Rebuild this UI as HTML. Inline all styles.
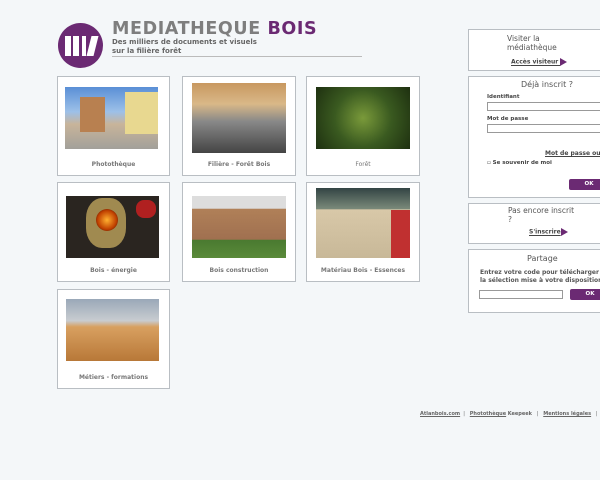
<!DOCTYPE html>
<html><head><meta charset="utf-8"><style>
body{margin:0;width:600px;height:480px;background:#f4f7f9;font-family:"DejaVu Sans","Liberation Sans",sans-serif;position:relative;overflow:hidden}
.a{position:absolute}
.t{position:absolute;background:#fff;border:1px solid #b9bec3;box-sizing:border-box}
.l{position:absolute;left:0;right:0;text-align:center;font-size:6px;font-weight:bold;color:#777}
.im{position:absolute}
.p{position:absolute;left:468px;width:140px;background:#fff;border:1px solid #b9bec3;box-sizing:border-box}
.btn{position:absolute;background:#6b2a73;color:#fff;font-size:5.5px;font-weight:bold;text-align:center;border-radius:2px}
.in{position:absolute;background:#fff;border:1px solid #999;box-sizing:border-box;height:9px}
.tri{display:inline-block;width:0;height:0;border-left:7px solid #6b2a73;border-top:4px solid transparent;border-bottom:4px solid transparent;vertical-align:middle}
</style></head><body>
<div class="a" style="left:58px;top:23px;width:45px;height:45px;border-radius:50%;background:#6b2a73"></div>
<div class="a" style="left:65px;top:36px;width:6px;height:20px;background:#fff"></div>
<div class="a" style="left:73px;top:36px;width:6px;height:20px;background:#fff"></div>
<div class="a" style="left:82px;top:36px;width:4px;height:20px;background:#fff"></div>
<div class="a" style="left:89px;top:36px;width:7px;height:20px;background:#fff;transform:skewX(-14deg)"></div>
<div class="a" style="left:112px;top:18px;font-size:17.5px;font-weight:bold;color:#7e7e7e;letter-spacing:0.6px;line-height:22px">MEDIATHEQUE <span style="color:#6b2a73">BOIS</span></div>
<div class="a" style="left:112px;top:38px;font-size:7px;font-weight:bold;color:#666;line-height:8.5px">Des milliers de documents et visuels<br>sur la filière forêt</div>
<div class="a" style="left:112px;top:56px;width:250px;height:1px;background:#bbb"></div>

<div class="t" style="left:57px;top:76px;width:113px;height:100px"><div class="l" style="top:84px">Photothèque</div></div>
<div class="im" style="left:65px;top:87px;width:93px;height:62px;background:linear-gradient(180deg,#5a8fd6 0,#9dc0e8 40%,#c8b49a 60%,#a2a09a 100%)"><div class="a" style="left:15px;top:10px;width:25px;height:35px;background:#b88050"></div><div class="a" style="left:60px;top:5px;width:33px;height:42px;background:#e8d890"></div></div>
<div class="t" style="left:182px;top:76px;width:114px;height:100px"><div class="l" style="top:84px">Filière - Forêt Bois</div></div>
<div class="im" style="left:192px;top:83px;width:94px;height:70px;background:linear-gradient(180deg,#c89860 0,#d9b888 30%,#888 55%,#444 100%)"></div>
<div class="t" style="left:306px;top:76px;width:114px;height:100px"><div class="l" style="top:84px;font-weight:normal">Forêt</div></div>
<div class="im" style="left:316px;top:87px;width:94px;height:62px;background:radial-gradient(circle at 50% 50%,#7a9a3a 0,#3a5a20 50%,#1e3010 100%)"></div>

<div class="t" style="left:57px;top:182px;width:113px;height:100px"><div class="l" style="top:84px">Bois - énergie</div></div>
<div class="im" style="left:66px;top:196px;width:93px;height:62px;background:#2a2520"><div class="a" style="left:20px;top:2px;width:40px;height:50px;border-radius:40%;background:#a08a50"></div><div class="a" style="left:30px;top:13px;width:22px;height:22px;border-radius:50%;background:radial-gradient(#ffb030,#c04000 60%,#200 100%)"></div><div class="a" style="left:70px;top:4px;width:20px;height:18px;background:#b02020;border-radius:8px"></div></div>
<div class="t" style="left:182px;top:182px;width:114px;height:100px"><div class="l" style="top:84px">Bois construction</div></div>
<div class="im" style="left:192px;top:196px;width:94px;height:62px;background:linear-gradient(180deg,#ddd 0,#ddd 20%,#b08058 21%,#a07050 70%,#4a7a30 71%,#5a8a3a 100%)"></div>
<div class="t" style="left:306px;top:182px;width:114px;height:100px"><div class="l" style="top:84px">Matériau Bois - Essences</div></div>
<div class="im" style="left:316px;top:188px;width:94px;height:70px;background:linear-gradient(180deg,#344 0,#7a8a7a 30%,#d8c8a8 31%,#c8b898 100%)"><div class="a" style="left:75px;top:22px;width:19px;height:48px;background:#c03030"></div></div>

<div class="t" style="left:57px;top:289px;width:113px;height:100px"><div class="l" style="top:84px">Métiers - formations</div></div>
<div class="im" style="left:66px;top:299px;width:93px;height:62px;background:linear-gradient(180deg,#9aa8b8 0,#c8ccd0 35%,#d8a060 45%,#b87838 100%)"></div>

<div class="p" style="top:29px;height:42px">
<div class="a" style="left:38px;top:4px;font-size:7.5px;color:#555;line-height:9px">Visiter la<br>médiathèque</div>
<div class="a" style="left:42px;top:28px;font-size:6px;font-weight:bold;color:#444;text-decoration:underline">Accès visiteur <span class="tri"></span></div></div>
<div class="p" style="top:76px;height:122px">
<div class="a" style="left:52px;top:3px;font-size:8px;color:#555">Déjà inscrit ?</div>
<div class="a" style="left:18px;top:17px;font-size:5.5px;font-weight:bold;color:#444">Identifiant</div>
<div class="in" style="left:18px;top:25px;width:120px"></div>
<div class="a" style="left:18px;top:39px;font-size:5.5px;font-weight:bold;color:#444">Mot de passe</div>
<div class="in" style="left:18px;top:47px;width:120px"></div>
<div class="a" style="left:76px;top:73px;font-size:6px;font-weight:bold;color:#444;text-decoration:underline;white-space:nowrap">Mot de passe oublié</div>
<div class="a" style="left:18px;top:83px;font-size:5.5px;font-weight:bold;color:#444;white-space:nowrap">▫ Se souvenir de moi</div>
<div class="btn" style="left:100px;top:102px;width:40px;height:11px;line-height:11px">OK</div></div>
<div class="p" style="top:203px;height:41px">
<div class="a" style="left:39px;top:2px;font-size:7.5px;color:#555;line-height:9px">Pas encore inscrit<br>?</div>
<div class="a" style="left:60px;top:24px;font-size:6px;font-weight:bold;color:#444;text-decoration:underline">S'inscrire<span class="tri"></span></div></div>
<div class="p" style="top:249px;height:64px">
<div class="a" style="left:58px;top:4px;font-size:8px;color:#555">Partage</div>
<div class="a" style="left:11px;top:19px;font-size:6px;font-weight:bold;color:#555;line-height:8px;white-space:nowrap">Entrez votre code pour télécharger<br>la sélection mise à votre disposition</div>
<div class="in" style="left:10px;top:40px;width:84px"></div>
<div class="btn" style="left:101px;top:39px;width:40px;height:11px;line-height:11px">OK</div></div>

<div class="a" style="left:420px;top:411px;font-size:5px;color:#666;white-space:nowrap"><u><b>Atlanbois.com</b></u> &nbsp;| &nbsp; <u><b>Photothèque</b></u> <b>Keepeek</b> &nbsp; | &nbsp; <u><b>Mentions légales</b></u> &nbsp; | &nbsp;</div>
</body></html>
